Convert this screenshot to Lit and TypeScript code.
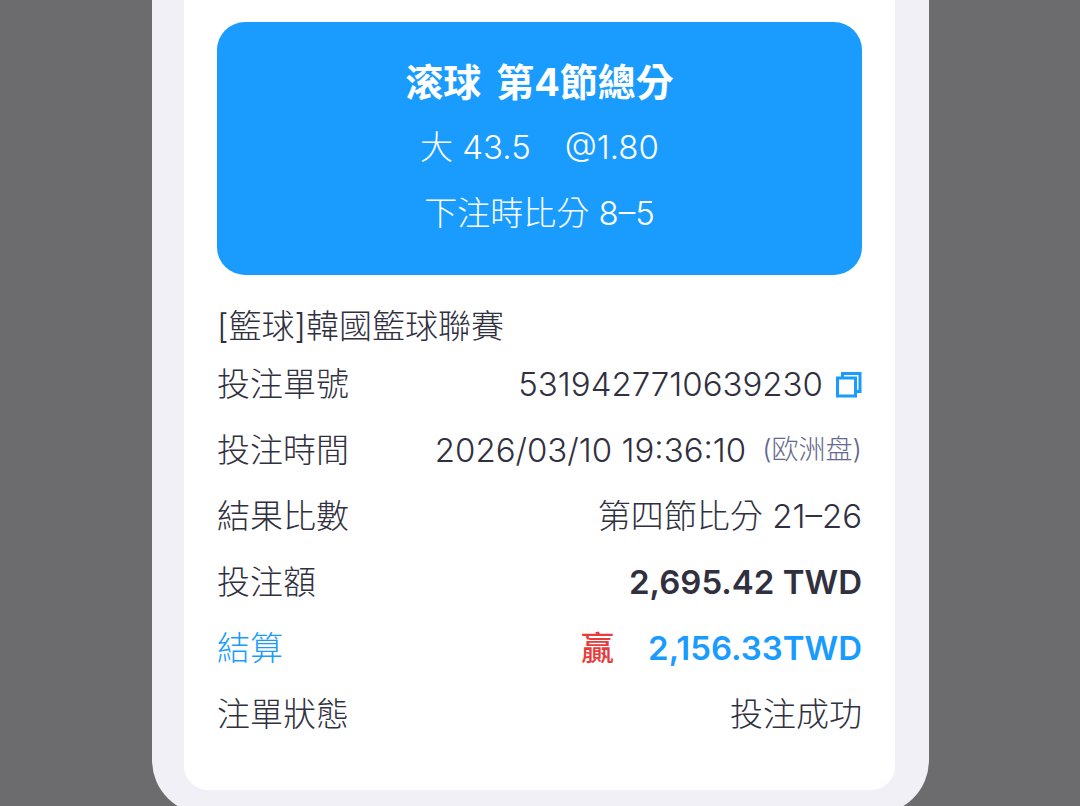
import { LitElement, html, css } from "lit";
import { customElement } from "lit/decorators.js";

@customElement("app-root")
export class AppRoot extends LitElement {
  static styles = css`
    :host {
      display: block;
      box-sizing: border-box;
      min-height: 100vh;
      padding: 0 151px 0 152px;
      background: #6c6c6e;
      color: #303040;
      font: 300 33px/40px Inter, "Noto Sans CJK TC", sans-serif;
    }
    .sheet {
      background: #f0f0f6;
      border-radius: 0 0 54px 54px;
      padding: 0 34px 24px 32px;
    }
    .card {
      background: #fff;
      border-radius: 0 0 24px 24px;
      padding: 22px 33px 43px;
    }
    .pick {
      background: #1a9cff;
      color: #fff;
      border-radius: 28px;
      padding: 30px 20px 29px;
      text-align: center;
      display: flex;
      flex-direction: column;
    }
    h1 {
      display: flex;
      justify-content: center;
      gap: 15px;
      margin: 0;
      font-size: 38px;
      line-height: 60px;
      font-weight: 700;
    }
    p {
      display: flex;
      justify-content: center;
      gap: 34px;
      margin: 0;
      line-height: 66px;
    }
    .pick p:first-of-type {
      padding-top: 2px;
    }
    h2 {
      margin: 28px 0 2px;
      font-size: 33px;
      font-weight: 300;
      line-height: 46px;
    }
    dl {
      margin: 0;
    }
    .row {
      display: flex;
      justify-content: space-between;
      line-height: 66px;
      white-space: nowrap;
    }
    dt,
    dd {
      margin: 0;
    }
    dd {
      display: flex;
      align-items: center;
    }
    .copy {
      border: 0;
      padding: 0;
      margin-left: 12px;
      background: none;
      display: flex;
    }
    .note {
      font-size: 27px;
      color: #66688c;
      margin-left: 16px;
    }
    .strong {
      font-weight: 600;
    }
    .blue {
      color: #1a9cff;
    }
    .win {
      color: #e63c3c;
      margin-right: 34px;
      font-weight: 500;
    }
  `;

  render() {
    return html`
      <main class="sheet">
        <article class="card">
          <section class="pick">
            <h1><span>滚球</span> <span>第4節總分</span></h1>
            <p><span>大 43.5</span> <span>@1.80</span></p>
            <p>下注時比分 8–5</p>
          </section>
          <h2>[籃球]韓國籃球聯賽</h2>
          <dl>
            <div class="row">
              <dt>投注單號</dt>
              <dd>
                <span>5319427710639230</span>
                <button class="copy" aria-label="複製">
                  <svg width="27" height="27" viewBox="0 0 27 27" fill="none" stroke="#1a9cff" stroke-width="3">
                    <path d="M2.5 7h18v18h-18zM7.5 7V2.5h17.5v18H20.5" />
                  </svg>
                </button>
              </dd>
            </div>
            <div class="row">
              <dt>投注時間</dt>
              <dd><span>2026/03/10 19:36:10</span><span class="note">(欧洲盘)</span></dd>
            </div>
            <div class="row"><dt>結果比數</dt><dd>第四節比分 21–26</dd></div>
            <div class="row"><dt>投注額</dt><dd class="strong">2,695.42 TWD</dd></div>
            <div class="row">
              <dt class="blue">結算</dt>
              <dd><span class="win">贏</span><span class="strong blue">2,156.33TWD</span></dd>
            </div>
            <div class="row"><dt>注單狀態</dt><dd>投注成功</dd></div>
          </dl>
        </article>
      </main>
    `;
  }
}
